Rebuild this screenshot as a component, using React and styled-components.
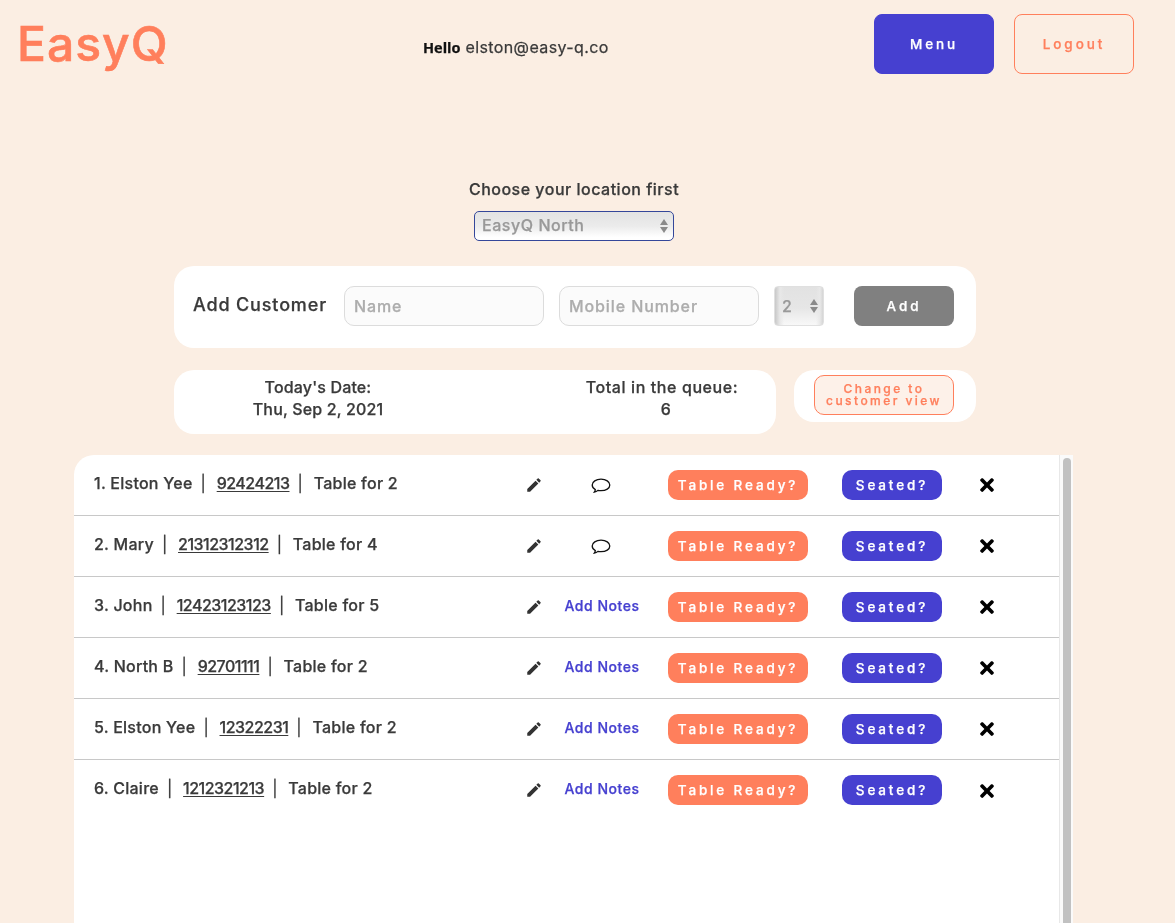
import React from "react";
import styled, { createGlobalStyle } from "styled-components";
import { MdEdit } from "react-icons/md";
import { FaTimes } from "react-icons/fa";

const coral = "#ff7f5c";
const indigo = "#4640d0";
const ink = "#3a3a3a";

const GlobalStyle = createGlobalStyle`
  html, body {
    margin: 0;
    height: 923px;
    overflow: hidden;
    background: #fbeee3;
  }
  body {
    font-family: Inter, "Liberation Sans", sans-serif;
    color: ${ink};
    -webkit-text-stroke: 0.25px currentColor;
  }
  #root {
    will-change: transform;
  }
  * {
    box-sizing: border-box;
  }
`;

const Header = styled.header`
  display: flex;
  align-items: flex-start;
  height: 74px;
  margin-top: 14px;
  padding-left: 17px;
`;

const Logo = styled.div`
  width: 406px;
  font-size: 48px;
  line-height: 60px;
  font-weight: 500;
  letter-spacing: 1px;
  color: ${coral};
  -webkit-text-stroke: 0.6px currentColor;
`;

const Greeting = styled.div`
  width: 451px;
  margin-top: 23px;
  font-size: 16px;
  line-height: 20px;
  font-weight: 400;
  letter-spacing: 0.4px;
  color: ${ink};
`;

const Hello = styled.strong`
  font-family: "Open Sans", sans-serif;
  font-size: 14.5px;
  font-weight: 700;
  letter-spacing: 0;
  color: #111;
`;

const NavButton = styled.button`
  width: 120px;
  height: 60px;
  margin-right: 20px;
  border-radius: 8px;
  border: 1px solid ${(p) => (p.$outline ? coral : indigo)};
  background: ${(p) => (p.$outline ? "transparent" : indigo)};
  color: ${(p) => (p.$outline ? coral : "#fff")};
  font-family: inherit;
  font-size: 13.5px;
  font-weight: 500;
  letter-spacing: 2.9px;
`;

const Main = styled.main`
  width: 1000px;
  margin-left: 74px;
`;

const LocationBlock = styled.section`
  display: flex;
  flex-direction: column;
  align-items: center;
  padding-top: 91px;
`;

const LocationLabel = styled.div`
  font-size: 16px;
  line-height: 20px;
  font-weight: 500;
  letter-spacing: 0.5px;
  margin-bottom: 12px;
`;

const SelectShell = styled.div`
  position: relative;
  width: ${(p) => p.$width}px;
  height: ${(p) => p.$height}px;
  flex: none;
  &::before,
  &::after {
    content: "";
    position: absolute;
    right: 6px;
    width: 0;
    height: 0;
    border-left: 4px solid transparent;
    border-right: 4px solid transparent;
    pointer-events: none;
  }
  &::before {
    top: calc(50% - 7px);
    border-bottom: 6px solid #8a8a8a;
  }
  &::after {
    top: calc(50% + 1px);
    border-top: 6px solid #8a8a8a;
  }
`;

const LocationSelect = styled.select`
  appearance: none;
  width: 100%;
  height: 100%;
  padding: 0 0 2px 7px;
  border: 1px solid #34479a;
  border-radius: 5px;
  background: linear-gradient(#e3e3e3 0%, #ebebeb 50%, #ffffff 90%);
  color: #999;
  font-family: inherit;
  font-size: 16px;
  font-weight: 500;
  letter-spacing: 0.55px;
`;

const SizeSelect = styled.select`
  appearance: none;
  width: 100%;
  height: 100%;
  padding: 0 0 1px 7px;
  border: 1px solid #e0e0e0;
  border-radius: 4px;
  background: linear-gradient(90deg, #c8c8c8 0, #e8e8e8 5px, transparent 9px, transparent 41px, #e8e8e8 45px, #c8c8c8 50px),
    linear-gradient(#e2e2e2 0%, #e6e6e6 55%, #f8f8f8 100%);
  color: #999;
  font-family: inherit;
  font-size: 16px;
  font-weight: 500;
`;

const AddCard = styled.section`
  display: flex;
  align-items: flex-start;
  height: 82px;
  margin: 25px 98px 0 100px;
  padding: 20px 0 0 19px;
  background: #fff;
  border-radius: 20px;
`;

const AddTitle = styled.div`
  width: 151px;
  font-size: 18px;
  line-height: 38px;
  font-weight: 500;
  letter-spacing: 0.85px;
  white-space: nowrap;
`;

const TextInput = styled.input`
  width: 200px;
  height: 40px;
  margin-right: 15px;
  padding: 0 9px;
  border: 1px solid #dcdcdc;
  border-radius: 10px;
  background: #fbfbfb;
  font-family: inherit;
  font-size: 16px;
  font-weight: 500;
  letter-spacing: 0.9px;
  &::placeholder {
    color: #adadad;
    opacity: 1;
  }
`;

const AddButton = styled.button`
  width: 100px;
  height: 40px;
  margin-left: 30px;
  border: none;
  border-radius: 8px;
  background: #808080;
  color: #fff;
  font-family: inherit;
  font-size: 13.5px;
  font-weight: 500;
  letter-spacing: 2.9px;
`;

const InfoStrip = styled.section`
  display: flex;
  align-items: flex-start;
  gap: 18px;
  margin: 22px 98px 0 100px;
`;

const InfoCard = styled.div`
  display: flex;
  width: 602px;
  height: 64px;
  padding-top: 6px;
  background: #fff;
  border-radius: 20px;
`;

const InfoItem = styled.div`
  width: ${(p) => p.$width}px;
  margin-left: ${(p) => p.$offset}px;
  text-align: center;
  font-size: 16px;
  line-height: 22px;
  font-weight: 500;
  letter-spacing: ${(p) => p.$spacing}px;
`;

const QueueCount = styled.span`
  padding-left: 8px;
`;

const ViewCard = styled.div`
  width: 182px;
  height: 52px;
  padding: 5px 0 0 20px;
  background: #fff;
  border-radius: 20px;
`;

const ViewButton = styled.button`
  width: 140px;
  height: 40px;
  padding: 0;
  border: 1px solid ${coral};
  border-radius: 10px;
  background: #fdf1e9;
  color: ${coral};
  font-family: inherit;
  font-size: 12px;
  line-height: 12px;
  font-weight: 500;
  letter-spacing: 2.45px;
`;

const QueueList = styled.section`
  display: flex;
  width: 999px;
  height: 468px;
  margin-top: 21px;
  background: #fff;
  border-top-left-radius: 20px;
  overflow: hidden;
`;

const QueueBody = styled.div`
  width: 985px;
  flex: none;
`;

const ScrollTrack = styled.div`
  display: flex;
  flex: 1;
  padding: 3px 2px 0 3px;
  background: #fafafa;
  border-left: 1px solid #e8e8e8;
`;

const ScrollThumb = styled.div`
  flex: 1;
  background: #c1c1c1;
  border-radius: 4px 4px 0 0;
`;

const Row = styled.div`
  display: flex;
  align-items: center;
  height: 61px;
  padding: 0 0 1px 20px;
  border-bottom: ${(p) => (p.$last ? "none" : "1px solid #c8c8c8")};
`;

const Customer = styled.div`
  width: 422px;
  padding-bottom: 4px;
  font-size: 16px;
  line-height: 20px;
  font-weight: 500;
  letter-spacing: 0.25px;
  white-space: pre;
`;

const Divider = styled.span`
  margin: 0 1.5px 0 -1px;
  font-weight: 400;
`;

const Phone = styled.a`
  color: inherit;
  letter-spacing: -0.5px;
  text-decoration: underline;
  text-underline-offset: 2px;
`;

const EditCell = styled.div`
  display: flex;
  justify-content: center;
  width: 36px;
  font-size: 18px;
  color: #333;
`;

const NotesCell = styled.div`
  display: flex;
  justify-content: center;
  width: 100px;
  color: #111;
`;

const NoteIcon = styled.svg`
  width: 20px;
  height: 16px;
  margin: 2px 2px 0 0;
  fill: none;
  stroke: currentColor;
  stroke-width: 1.3;
`;

const AddNotes = styled.a`
  padding-bottom: 3px;
  color: ${indigo};
  font-size: 14px;
  font-weight: 500;
  letter-spacing: 0.55px;
  white-space: nowrap;
`;

const ActionButton = styled.button`
  width: ${(p) => p.$width}px;
  height: 30px;
  margin-left: ${(p) => p.$gap}px;
  padding: 0;
  border: none;
  border-radius: 10px;
  background: ${(p) => p.$color};
  color: #fff;
  font-family: inherit;
  font-size: 13.5px;
  font-weight: 500;
  letter-spacing: 2.85px;
`;

const RemoveCell = styled.div`
  display: flex;
  justify-content: center;
  width: 36px;
  margin: 1px 0 0 27px;
  color: #000;
  font-size: 20px;
`;

const customers = [
  { name: "Elston Yee", phone: "92424213", size: 2, hasNotes: true },
  { name: "Mary", phone: "21312312312", size: 4, hasNotes: true },
  { name: "John", phone: "12423123123", size: 5 },
  { name: "North B", phone: "92701111", size: 2 },
  { name: "Elston Yee", phone: "12322231", size: 2 },
  { name: "Claire", phone: "1212321213", size: 2 },
];

const App = () => {
  return (
    <>
      <GlobalStyle />
      <Header>
        <Logo>EasyQ</Logo>
        <Greeting>
          <Hello>Hello</Hello> elston@easy-q.co
        </Greeting>
        <NavButton>Menu</NavButton>
        <NavButton $outline>Logout</NavButton>
      </Header>
      <Main>
        <LocationBlock>
          <LocationLabel>Choose your location first</LocationLabel>
          <SelectShell $width={200} $height={30}>
            <LocationSelect defaultValue="north">
              <option value="north">EasyQ North</option>
            </LocationSelect>
          </SelectShell>
        </LocationBlock>
        <AddCard>
          <AddTitle>Add Customer</AddTitle>
          <TextInput placeholder="Name" />
          <TextInput placeholder="Mobile Number" />
          <SelectShell $width={50} $height={40}>
            <SizeSelect defaultValue="2">
              <option value="2">2</option>
            </SizeSelect>
          </SelectShell>
          <AddButton>Add</AddButton>
        </AddCard>
        <InfoStrip>
          <InfoCard>
            <InfoItem $width={200} $offset={44} $spacing={0.15}>
              Today's Date:
              <br />
              Thu, Sep 2, 2021
            </InfoItem>
            <InfoItem $width={200} $offset={144} $spacing={0.6}>
              Total in the queue:
              <br />
              <QueueCount>6</QueueCount>
            </InfoItem>
          </InfoCard>
          <ViewCard>
            <ViewButton>
              Change to
              <br />
              customer view
            </ViewButton>
          </ViewCard>
        </InfoStrip>
        <QueueList>
          <QueueBody>
            {customers.map((c, i) => (
              <Row key={i} $last={i === customers.length - 1}>
                <Customer>
                  {i + 1}. {c.name}  <Divider>|</Divider>  <Phone>{c.phone}</Phone>  <Divider>|</Divider>  Table for {c.size}
                </Customer>
                <EditCell>
                  <MdEdit />
                </EditCell>
                <NotesCell>
                  {c.hasNotes ? (
                    <NoteIcon viewBox="0 0 20 16">
                      <path d="M10 1.2C5 1.2 1.2 3.8 1.2 7c0 1.9 1.2 3.5 3.1 4.6-.1 1-.5 1.9-1 2.6 1.5-.2 2.8-1 3.6-1.8.9.2 2 .3 3.1.3 5 0 8.8-2.4 8.8-5.7S15 1.2 10 1.2z" />
                    </NoteIcon>
                  ) : (
                    <AddNotes>Add Notes</AddNotes>
                  )}
                </NotesCell>
                <ActionButton $width={140} $gap={16} $color={coral}>
                  Table Ready?
                </ActionButton>
                <ActionButton $width={100} $gap={34} $color={indigo}>
                  Seated?
                </ActionButton>
                <RemoveCell>
                  <FaTimes />
                </RemoveCell>
              </Row>
            ))}
          </QueueBody>
          <ScrollTrack>
            <ScrollThumb />
          </ScrollTrack>
        </QueueList>
      </Main>
    </>
  );
};

export default App;
